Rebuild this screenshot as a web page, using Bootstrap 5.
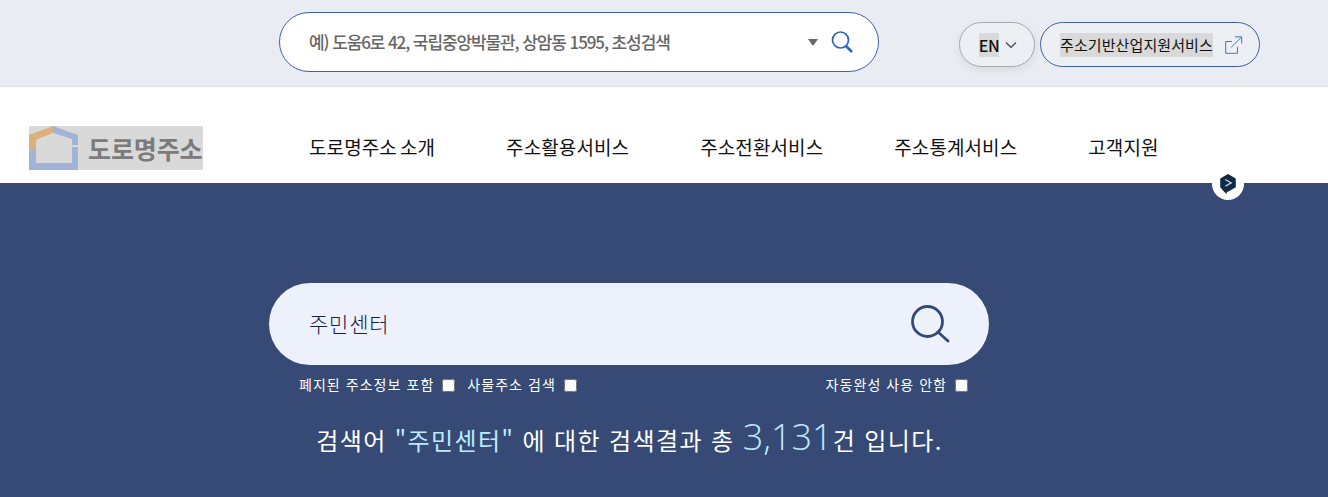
<!DOCTYPE html>
<html lang="ko">
<head>
<meta charset="utf-8">
<title>도로명주소</title>
<link rel="stylesheet" href="https://cdn.jsdelivr.net/npm/bootstrap@5.3.0/dist/css/bootstrap.min.css">
<style>
html,body{height:497px;overflow:hidden}
body{font-family:"Noto Sans CJK KR","Noto Sans",sans-serif;background:#364a75;color:#111}
.topstrip{height:87px;background:#e9edf3;border-bottom:1px solid #dfe3e8;padding:12px 68px 0 279px}
.addr-box{width:600px;height:60px;background:#fff;border:1px solid #3f5fb5;border-radius:30px;padding:0 24px 0 29px}
.addr-text{font-size:17px;letter-spacing:-1.1px;color:#666;font-weight:500;flex:1;line-height:60px}
.addr-caret{width:0;height:0;border-left:5px solid transparent;border-right:5px solid transparent;border-top:7px solid #666;margin-right:12px;margin-top:1px}
.toolset{margin-left:80px;margin-top:10px;gap:5px}
.lang-pill{width:76px;height:45px;border:1px solid #aaa;border-radius:23px;background:#eceff4;box-shadow:0 3px 8px rgba(0,0,0,.08);font-size:16px;font-weight:500;padding:0 0 0 2px;gap:6px;color:#111;letter-spacing:-.3px}
.svc-pill{width:220px;height:45px;border:1px solid #3f5fa5;border-radius:23px;background:#eceff4;font-size:15px;font-weight:400;padding:0 0 0 19px;gap:12px;color:#111;letter-spacing:.1px}
.hl{background:#d9d9d9;line-height:24px}
.menubar{height:96px;background:#fff;position:relative}
.logo-box{position:relative;margin:39px 0 0 29px;width:174px;height:44px;background:#d9d9d9;gap:9px;flex:none;overflow:hidden}
.logo-txt{font-size:25px;font-weight:700;color:#7b7b7b;line-height:44px;letter-spacing:-.1px;white-space:nowrap}
.menu-list{margin:0 0 0 106px;padding:36px 0 0;list-style:none;gap:71px}
.menu-list a{font-size:19px;font-weight:400;letter-spacing:.1px;word-spacing:-2.4px;color:#111;text-decoration:none;line-height:48px;white-space:nowrap}
.ext-badge{position:absolute;left:1212px;top:81px;width:32px;height:32px;background:#fff;border-radius:50%;z-index:2}
.hero{height:314px;background:#364a75;padding:100px 0 0 269px}
.hero-search{width:720px;height:82px;background:#ecf1fc;border-radius:41px;padding:0 38px 0 40px}
.hero-q{font-size:21px;letter-spacing:.8px;color:#16233a;font-weight:300}
.opts{width:720px;color:#fff;font-size:14px;padding:11px 21px 0 30px;letter-spacing:1.05px;line-height:17px}
.opts input{width:13px;height:13px;margin:3px 0 0 8px;flex:none;vertical-align:top}
.opts .gapper{margin-left:12px}
.summary{width:720px;margin-top:22px;color:#fff;text-align:center;font-size:24px;font-weight:400;letter-spacing:1.4px;line-height:44px;white-space:nowrap;padding-left:1px}
.hi{color:#bdeafc}
.big-n{font-family:"Open Sans","Noto Sans",sans-serif;font-size:36px;font-weight:300;letter-spacing:0}
</style>
</head>
<body>
<div class="topstrip d-flex align-items-start">
  <div class="addr-box d-flex align-items-center">
    <div class="addr-text">예) 도움6로 42, 국립중앙박물관, 상암동 1595, 초성검색</div>
    <span class="addr-caret"></span>
    <svg width="24" height="24" viewBox="0 0 24 24" fill="none" stroke="#2f62c4" stroke-width="1.7"><circle cx="10.5" cy="10" r="8"/><path d="M16 16l6 6" stroke-width="2.6"/></svg>
  </div>
  <div class="toolset d-flex">
    <button type="button" class="btn lang-pill d-flex align-items-center justify-content-center"><span class="hl">EN</span>
      <svg width="12" height="8" viewBox="0 0 12 8" fill="none" stroke="#444" stroke-width="1.2"><path d="M1 1.5l5 5 5-5"/></svg></button>
    <button type="button" class="btn svc-pill d-flex align-items-center"><span class="hl">주소기반산업지원서비스</span>
      <svg width="18" height="18" viewBox="0 0 18 18" fill="none" stroke="#4a72bc" stroke-width="1"><path d="M7 5.5H.7v11.8h11.8V11"/><path d="M6 11.5L16.5 1M10 .8h6.7V7.5"/></svg></button>
  </div>
</div>
<div class="menubar d-flex align-items-start">
  <div class="logo-box d-flex">
    <svg width="50" height="44" viewBox="0 0 50 44" class="flex-none">
      <path d="M0 24H7V37H43V21H49V44H0Z" fill="#a0b4d8"/>
      <path d="M0 9L24 0V7L7 14V24H0Z" fill="#dcb07e"/>
      <path d="M24 0L49 9V19H43V13L24 7Z" fill="#a0b4d8"/>
    </svg>
    <span class="logo-txt">도로명주소</span>
  </div>
  <ul class="menu-list d-flex">
    <li><a href="#">도로명주소 소개</a></li>
    <li><a href="#">주소활용서비스</a></li>
    <li><a href="#">주소전환서비스</a></li>
    <li><a href="#">주소통계서비스</a></li>
    <li><a href="#">고객지원</a></li>
  </ul>
  <div class="ext-badge d-flex align-items-center justify-content-center">
    <svg width="18" height="20" viewBox="0 0 16 18"><path d="M8 0L15 4V12L8 16H7V18L4.5 16L1 12V4Z" fill="#0f2b46"/><path d="M5.5 5L11 8L5.5 11" fill="none" stroke="#cfd6de" stroke-width="1.1"/></svg>
  </div>
</div>
<div class="hero">
  <div class="hero-search d-flex align-items-center justify-content-between">
    <span class="hero-q">주민센터</span>
    <svg width="40" height="40" viewBox="0 0 40 40" fill="none" stroke="#33497a" stroke-width="2.8" stroke-linecap="round"><circle cx="16.5" cy="17.5" r="15"/><path d="M27 28l10 9"/></svg>
  </div>
  <div class="opts d-flex">
    <label class="d-flex">폐지된 주소정보 포함<input type="checkbox"></label>
    <label class="d-flex gapper">사물주소 검색<input type="checkbox"></label>
    <label class="d-flex ms-auto">자동완성 사용 안함<input type="checkbox" class="ms-2"></label>
  </div>
  <div class="summary">검색어 <span class="hi">"주민센터"</span> 에 대한 검색결과 총 <span class="hi big-n">3,131</span>건 입니다.</div>
</div>
<script src="https://cdn.jsdelivr.net/npm/bootstrap@5.3.0/dist/js/bootstrap.bundle.min.js"></script>
</body>
</html>
